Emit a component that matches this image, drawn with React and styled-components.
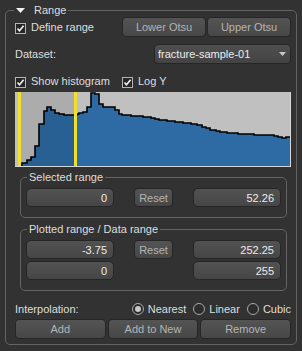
import styled, { createGlobalStyle } from "styled-components";

const GlobalStyle = createGlobalStyle`
  html, body {
    margin: 0;
    padding: 0;
    background: #323232;
  }
  body {
    font-family: "Liberation Sans", Arial, sans-serif;
    font-size: 11px;
    color: #dedede;
  }
`;

const Page = styled.div`
  width: 302px;
  height: 351px;
  box-sizing: border-box;
  padding: 10px 0 0 5px;
  overflow: hidden;
`;

const GroupBox = styled.div`
  position: relative;
  box-sizing: border-box;
  border: 1px solid #646464;
  border-radius: 5px;
  display: flex;
  flex-direction: column;
`;

const OuterGroup = styled(GroupBox)`
  width: 292px;
  padding: 6px 5px 5px 9px;
`;

const InnerGroup = styled(GroupBox)`
  margin: ${(p) => p.$top}px 4px 0 5px;
  padding: 10px 5px 10px 5px;
  gap: 2px;
`;

const Title = styled.div`
  position: absolute;
  top: -8px;
  left: ${(p) => p.$left}px;
  height: 14px;
  padding: 0 2px;
  display: flex;
  align-items: center;
  gap: 9px;
  background: #323232;
  line-height: 14px;
  white-space: nowrap;
`;

const Row = styled.div`
  display: grid;
  grid-template-columns: ${(p) => p.$cols || "1fr"};
  column-gap: 1px;
  align-items: center;
  height: ${(p) => p.$h || 20}px;
  margin-top: ${(p) => p.$top || 0}px;
`;

const Label = styled.span`
  color: #dedede;
  white-space: nowrap;
`;

const Button = styled.button`
  height: 20px;
  box-sizing: border-box;
  border: 1px solid #262626;
  border-radius: 4px;
  background: linear-gradient(#545454, #474747);
  color: #b4b4b4;
  font-family: inherit;
  font-size: 11px;
  padding: 0;
`;

const Check = styled.label`
  display: flex;
  align-items: center;
  gap: 5px;
  white-space: nowrap;
  color: #dedede;
`;

const CheckBox = styled.span`
  width: 11px;
  height: 11px;
  box-sizing: border-box;
  border: 1px solid #b4b4b4;
  background: #262626;
  display: flex;
  align-items: center;
  justify-content: center;
  margin-top: 2px;
`;

const Combo = styled.div`
  height: 20px;
  box-sizing: border-box;
  border: 1px solid #262626;
  border-radius: 4px;
  background: linear-gradient(#4f4f4f, #434343);
  display: flex;
  align-items: center;
  justify-content: space-between;
  padding: 0 4px 0 3px;
  color: #ececec;
`;

const Plot = styled.div`
  margin-top: 1px;
  height: 75px;
  display: flex;
`;

const FieldRow = styled.div`
  display: grid;
  grid-template-columns: 1fr 39px 1fr;
  column-gap: 20px;
  height: 19px;
`;

const Field = styled.div`
  box-sizing: border-box;
  height: 19px;
  border: 1px solid #262626;
  border-radius: 5px;
  background: linear-gradient(#525252, #464646);
  color: #ececec;
  display: flex;
  align-items: center;
  justify-content: flex-end;
  padding-right: 6px;
`;

const SmallButton = styled(Button)`
  height: 19px;
`;

const RadioRow = styled.div`
  display: flex;
  align-items: center;
  height: 20px;
  margin-top: 8px;
`;

const RadioGroup = styled.div`
  margin-left: auto;
  display: flex;
  align-items: center;
  gap: 7px;
`;

const Radio = styled.label`
  display: flex;
  align-items: center;
  gap: 4px;
  color: #dedede;
`;

const RadioDot = styled.span`
  width: 12px;
  height: 12px;
  box-sizing: border-box;
  border-radius: 50%;
  border: 1px solid #a8a8a8;
  background: #2c2c2c;
  display: flex;
  align-items: center;
  justify-content: center;
  &::after {
    content: "";
    width: 6px;
    height: 6px;
    border-radius: 50%;
    background: ${(p) => (p.$on ? "#c8c8c8" : "transparent")};
  }
`;

const ButtonBar = styled.div`
  display: grid;
  grid-template-columns: repeat(3, 1fr);
  column-gap: 2px;
`;

function CheckItem({ children }) {
  return (
    <Check>
      <CheckBox>
        <svg width="9" height="9" viewBox="0 0 9 9">
          <path d="M1.5 4.5 L3.5 6.8 L7.6 1.8" fill="none" stroke="#f2f2f2" strokeWidth="1.6" />
        </svg>
      </CheckBox>
      {children}
    </Check>
  );
}

// histogram steps in page coordinates: [x where step starts, top y]
const STEPS = [
  [19, 165], [22, 163], [27, 160], [31, 157], [35, 146], [39, 124], [44, 111],
  [47, 107], [51, 110], [55, 113], [59, 114], [64, 115], [77, 114], [79, 113],
  [83, 112], [87, 107], [91, 93], [95, 94], [99, 104], [103, 107], [115, 110],
  [119, 114], [122, 115], [131, 116], [143, 117], [151, 118], [155, 119],
  [159, 120], [167, 121], [175, 122], [183, 123], [191, 124], [197, 125],
  [202, 127], [206, 128], [210, 130], [216, 131], [220, 132], [227, 133],
  [238, 134], [254, 135], [274, 136], [278, 137], [282, 138], [286, 137],
];
const OX = 15;
const OY = 92;
const END_X = 290;

function outline() {
  let d = `M${STEPS[0][0] - OX} ${74}`;
  STEPS.forEach(([x, y], i) => {
    const nx = i < STEPS.length - 1 ? STEPS[i + 1][0] : END_X;
    d += ` L${x - OX} ${y - OY} L${nx - OX} ${y - OY}`;
  });
  return d;
}

function Histogram() {
  const line = outline();
  return (
    <svg width="276" height="75" viewBox="0 0 276 75">
      <rect x="0" y="0" width="276" height="75" fill="#c0c0c0" />
      <path d={`${line} L${END_X - OX} 74 Z`} fill="#2e6ba4" />
      <rect x={21 - OX} y="0" width={53} height="74" fill="#000" opacity="0.1" />
      <path d={line} fill="none" stroke="#000" strokeWidth="1.6" />
      <rect x={18 - OX} y="0" width="3" height="74" fill="#f2df2a" />
      <rect x={74 - OX} y="0" width="3" height="74" fill="#f2df2a" />
      <rect x="0" y="74" width="276" height="1" fill="#d6d6d6" />
      <rect x="275" y="0" width="1" height="75" fill="#d6d6d6" />
    </svg>
  );
}

export default function App() {
  return (
    <Page>
      <GlobalStyle />
      <OuterGroup>
        <Title $left={8}>
          <svg width="9" height="5" viewBox="0 0 9 5">
            <path d="M0 0 L9 0 L4.5 5 Z" fill="#f0f0f0" />
          </svg>
          Range
        </Title>

        <Row $cols="1fr 84px 84px">
          <CheckItem>Define range</CheckItem>
          <Button>Lower Otsu</Button>
          <Button>Upper Otsu</Button>
        </Row>

        <Row $cols="1fr 137px" $top={7}>
          <Label>Dataset:</Label>
          <Combo>
            fracture-sample-01
            <svg width="7" height="4" viewBox="0 0 7 4">
              <path d="M0 0 L7 0 L3.5 4 Z" fill="#c8c8c8" />
            </svg>
          </Combo>
        </Row>

        <Row $cols="1fr 84px 84px" $top={7}>
          <CheckItem>Show histogram</CheckItem>
          <CheckItem>Log Y</CheckItem>
        </Row>

        <Plot>
          <Histogram />
        </Plot>

        <InnerGroup $top={10}>
          <Title $left={6}>Selected range</Title>
          <FieldRow>
            <Field>0</Field>
            <SmallButton>Reset</SmallButton>
            <Field>52.26</Field>
          </FieldRow>
        </InnerGroup>

        <InnerGroup $top={11}>
          <Title $left={6}>Plotted range / Data range</Title>
          <FieldRow>
            <Field>-3.75</Field>
            <SmallButton>Reset</SmallButton>
            <Field>252.25</Field>
          </FieldRow>
          <FieldRow>
            <Field>0</Field>
            <span />
            <Field>255</Field>
          </FieldRow>
        </InnerGroup>

        <RadioRow>
          <Label>Interpolation:</Label>
          <RadioGroup>
            <Radio>
              <RadioDot $on />
              Nearest
            </Radio>
            <Radio>
              <RadioDot />
              Linear
            </Radio>
            <Radio>
              <RadioDot />
              Cubic
            </Radio>
          </RadioGroup>
        </RadioRow>

        <ButtonBar>
          <Button>Add</Button>
          <Button>Add to New</Button>
          <Button>Remove</Button>
        </ButtonBar>
      </OuterGroup>
    </Page>
  );
}
